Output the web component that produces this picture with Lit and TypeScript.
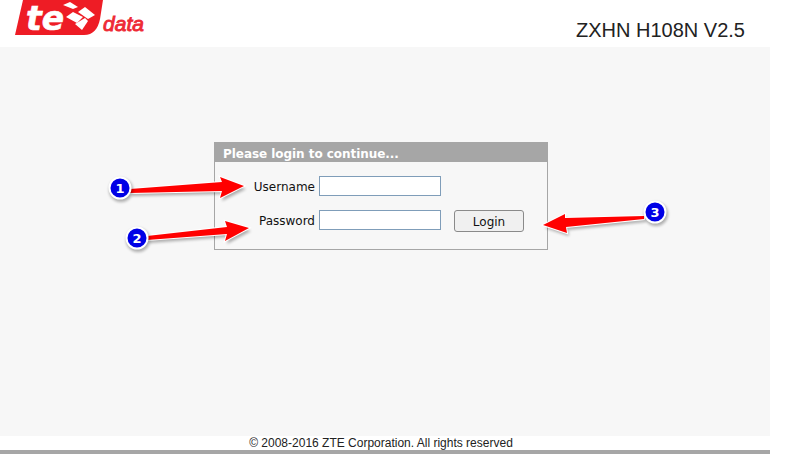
import { LitElement, css, html, svg } from "lit";
import { customElement } from "lit/decorators.js";

// outline of each callout arrow, starting at the tail by the badge
const arrows = [
  { n: "1", cx: 120, cy: 188, outline: "130,189 222,182 220,177 244,186 220,198 222,191 130,193" },
  { n: "2", cx: 137, cy: 238, outline: "147,236 227,227 225,221 249,228 225,241 227,234 147,240" },
  { n: "3", cx: 655, cy: 212, outline: "644,216 565,218 565,214 543,225 567,233 566,227 644,219" },
];

@customElement("app-root")
export class AppRoot extends LitElement {
  static styles = css`
    :host {
      display: block;
      position: relative;
      width: 786px;
      height: 454px;
      overflow: hidden;
      background: #fff;
    }
    .page {
      width: 770px;
      height: 454px;
      display: flex;
      flex-direction: column;
    }
    header {
      height: 47px;
      display: flex;
      justify-content: space-between;
      flex: none;
    }
    .logo {
      display: block;
      width: 150px;
      height: 40px;
      margin-left: 10px;
    }
    .model {
      font: 20px/24px "Liberation Sans", Arial, sans-serif;
      color: #222;
      margin: 18px 25px 0 0;
    }
    main {
      flex: 1;
      background: #f7f7f7;
      padding: 95px 0 0 214px;
    }
    .panel {
      width: 334px;
      height: 108px;
      box-sizing: border-box;
      border: 1px solid #a6a6a6;
      border-top: 0;
    }
    .title {
      height: 20px;
      margin: 0 -1px;
      padding-left: 9px;
      background: #a6a6a6;
      color: #fff;
      font: bold 12px/24px "DejaVu Sans", Verdana, sans-serif;
      letter-spacing: -0.05px;
    }
    form {
      display: grid;
      grid-template-columns: 100px 122px 70px;
      column-gap: 4px;
      row-gap: 12px;
      padding-top: 14px;
      align-items: start;
    }
    label {
      font: 12px/22px "DejaVu Sans", Verdana, sans-serif;
      color: #111;
      text-align: right;
    }
    input {
      box-sizing: border-box;
      width: 122px;
      height: 20px;
      margin: 0;
      border: 1px solid #7f9db9;
      background: #fff;
      padding: 0;
    }
    button {
      box-sizing: border-box;
      width: 70px;
      height: 22px;
      margin-left: 9px;
      border: 1px solid #8a8a8a;
      border-radius: 3px;
      background: #f0f0f0;
      color: #111;
      font: 12px/18px "DejaVu Sans", Verdana, sans-serif;
      padding: 2px 0 0;
    }
    .spacer {
      width: 70px;
    }
    footer {
      flex: none;
      height: 14px;
      text-align: center;
      font: 12px/15px "Liberation Sans", Arial, sans-serif;
      color: #222;
      padding-right: 8px;
      box-sizing: border-box;
      white-space: nowrap;
    }
    .rule {
      flex: none;
      height: 4px;
      background: #a6a6a6;
    }
    .notes {
      position: absolute;
      left: 0;
      top: 0;
      pointer-events: none;
    }
    .notes text {
      font: bold 13px "DejaVu Sans", Verdana, sans-serif;
      fill: #fff;
      text-anchor: middle;
    }
  `;

  private renderArrow(a: (typeof arrows)[number]) {
    return svg`
      <polygon points=${a.outline} transform="translate(2 3)" fill="#000" opacity="0.3" filter="url(#soft)"></polygon>
      <polygon points=${a.outline} fill="#f00" stroke="#fff" stroke-width="2" paint-order="stroke"></polygon>
      <circle cx=${a.cx + 1} cy=${a.cy + 2} r="12" fill="#000" opacity="0.3" filter="url(#soft)"></circle>
      <circle cx=${a.cx} cy=${a.cy} r="10.5" fill="#0000e6" stroke="#fff" stroke-width="2"></circle>
      <text x=${a.cx} y=${a.cy + 5}>${a.n}</text>
    `;
  }

  render() {
    return html`
      <div class="page">
        <header>
          <svg class="logo" viewBox="10 0 150 40">
            <path
              d="M23 0H103L100 19C98 29 93 35 84 35H15Z"
              fill="#ee1c25"
            ></path>
            <text
              x="26"
              y="30"
              font-family="'DejaVu Sans', Verdana, sans-serif"
              font-size="33"
              font-weight="bold"
              font-style="italic"
              fill="#fff"
              stroke="#fff"
              stroke-width="0.6"
            >te</text>
            <g fill="#fff">
              <path d="M63 5L70 2L78 7L73 9Z"></path>
              <path d="M66 17L73 12L83 17L77 23Z"></path>
              <path d="M78 12L85 7L95 15L88 19Z"></path>
              <path d="M75 24L85 18L88 21L82 30Z"></path>
            </g>
            <text
              x="103"
              y="31"
              font-family="'Liberation Sans', Arial, sans-serif"
              font-size="21"
              font-style="italic"
              fill="#ee2a35"
              stroke="#ee2a35"
              stroke-width="0.9"
              textLength="41"
            >data</text>
          </svg>
          <div class="model">ZXHN H108N V2.5</div>
        </header>
        <main>
          <div class="panel">
            <div class="title">Please login to continue...</div>
            <form>
              <label>Username</label>
              <input type="text" />
              <span class="spacer"></span>
              <label>Password</label>
              <input type="password" />
              <button type="button">Login</button>
            </form>
          </div>
        </main>
        <footer>© 2008-2016 ZTE Corporation. All rights reserved</footer>
        <div class="rule"></div>
      </div>
      <svg class="notes" width="786" height="454" viewBox="0 0 786 454">
        <defs>
          <filter id="soft" x="-20%" y="-50%" width="140%" height="200%">
            <feGaussianBlur stdDeviation="1.5"></feGaussianBlur>
          </filter>
        </defs>
        ${arrows.map((a) => this.renderArrow(a))}
      </svg>
    `;
  }
}
